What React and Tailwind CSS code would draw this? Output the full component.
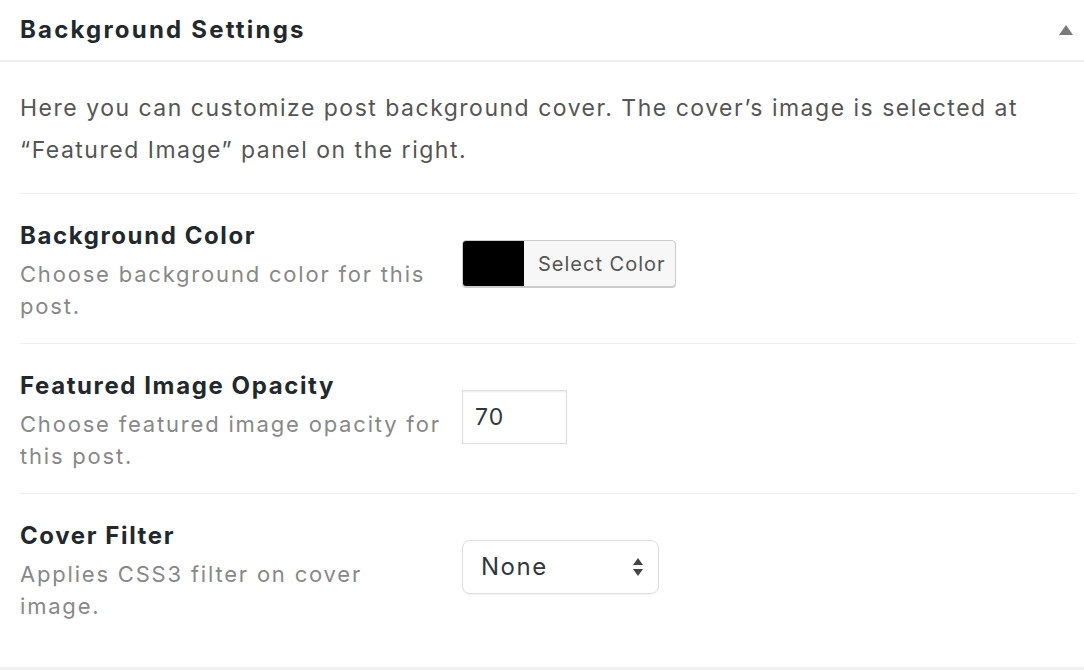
import { useState } from "react";

function Row({ title, desc, children, last }) {
  return (
    <div
      className={
        "ml-5 mr-2 flex items-start pt-[27px] " +
        (last ? "pb-[45px]" : "pb-[21px] border-b border-[#eeeeee]")
      }
    >
      <div className="w-[424px] shrink-0">
        <h3 className="text-[24px] leading-[30px] font-bold tracking-[1.6px] text-[#23282d]">{title}</h3>
        <p className="mt-[7px] text-[22px] leading-[32px] tracking-[1.8px] text-[#888888]">{desc}</p>
      </div>
      <div className="ml-[18px] mt-[19px]">{children}</div>
    </div>
  );
}

export default function App() {
  const [opacity, setOpacity] = useState("70");

  return (
    <div className="w-[1084px] h-[670px] bg-[#f1f1f1] overflow-hidden font-['Inter',sans-serif]">
      <div className="h-[667px] bg-white">
        <div className="h-[62px] flex items-center justify-between pl-5 pr-[10px] border-b-2 border-[#eeeeee]">
          <h2 className="text-[24px] font-bold tracking-[2.2px] text-[#23282d]">Background Settings</h2>
          <svg width="16" height="12" viewBox="0 0 16 12">
            <path d="M8 1 L15 11 L1 11 Z" fill="#7a7a7a" />
          </svg>
        </div>

        <p className="ml-5 mr-2 pt-[25px] pb-[22px] text-[23px] leading-[42px] tracking-[1.5px] text-[#555555] border-b border-[#eeeeee]">
          Here you can customize post background cover. The cover’s image is selected at
          “Featured Image” panel on the right.
        </p>

        <Row title="Background Color" desc="Choose background color for this post.">
          <button className="flex w-[214px] h-[47px] rounded-[4px] border border-[#cccccc] shadow-[0_1px_0_#cccccc] overflow-hidden bg-[#f7f7f7]">
            <span className="w-[61px] h-full bg-black" />
            <span className="pl-[14px] flex items-center text-[20px] tracking-[1px] text-[#555555]">Select Color</span>
          </button>
        </Row>

        <Row title="Featured Image Opacity" desc="Choose featured image opacity for this post.">
          <input
            value={opacity}
            onChange={(e) => setOpacity(e.target.value)}
            className="w-[105px] h-[54px] border border-[#dddddd] px-[12px] text-[23px] tracking-[1px] text-[#32373c] shadow-[inset_0_1px_2px_rgba(0,0,0,0.07)] outline-none"
          />
        </Row>

        <Row title="Cover Filter" desc="Applies CSS3 filter on cover image." last>
          <div className="w-[197px] h-[54px] flex items-center justify-between rounded-[8px] border border-[#dddddd] pl-[18px] pr-[14px] shadow-[0_1px_1px_rgba(0,0,0,0.05)]">
            <span className="text-[24px] tracking-[1.5px] text-[#32373c]">None</span>
            <svg width="12" height="22" viewBox="0 0 12 22">
              <path d="M6 2 L11 9 L1 9 Z" fill="#444444" />
              <path d="M6 20 L11 13 L1 13 Z" fill="#444444" />
            </svg>
          </div>
        </Row>
      </div>
    </div>
  );
}
